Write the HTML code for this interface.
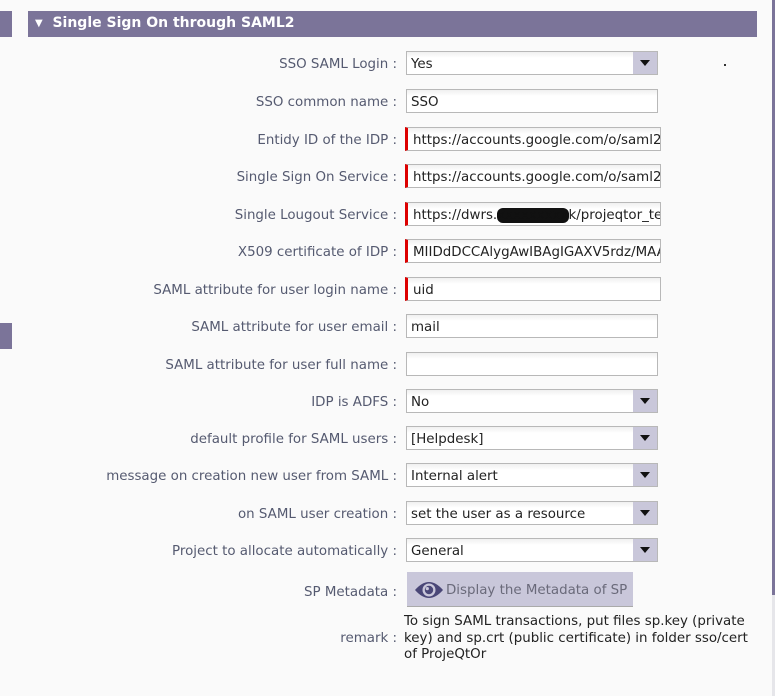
<!DOCTYPE html>
<html><head><meta charset="utf-8"><style>
html,body{margin:0;padding:0;}
body{width:775px;height:696px;background:#fafafa;position:relative;overflow:hidden;font-family:"DejaVu Sans","Liberation Sans",sans-serif;font-size:13.4px;}
.bar{position:absolute;background:#7b7499;}
.hdr{left:28px;top:11px;width:729px;height:26px;color:#fff;font-weight:bold;font-size:14px;line-height:25px;box-sizing:border-box;padding-left:7px;}
.lbl{position:absolute;right:378px;color:#555a70;white-space:nowrap;line-height:16px;}
.in{position:absolute;left:406px;width:252px;height:24px;box-sizing:border-box;border:1px solid #b8b8b8;background:linear-gradient(#f0f0f0,#fff 6px);color:#222;line-height:25px;padding-left:4px;overflow:hidden;white-space:nowrap;}
.req{left:405px;width:256px;border-left:3px solid #d00;padding-left:5px;}
.sel .ar{position:absolute;right:0;top:0;width:24px;height:22px;background:#c9c7da;}
.sel .ar:after{content:"";position:absolute;left:7px;top:8px;border-left:5px solid transparent;border-right:5px solid transparent;border-top:6px solid #111;}
</style></head><body>
<div class="bar" style="left:0;top:11px;width:12px;height:26px"></div>
<div class="bar" style="left:0;top:323px;width:12px;height:26px"></div>
<div class="bar" style="left:772px;top:0;width:3px;height:595px"></div>
<div style="position:absolute;left:772px;top:595px;width:3px;height:101px;background:#e6e6ea"></div>
<div class="bar hdr"><span style="font-size:10px;position:relative;top:-1px">&#9660;</span>&nbsp; Single Sign On through SAML2</div>
<div style="position:absolute;left:724px;top:64px;width:2px;height:2px;background:#333"></div>

<div class="lbl" style="top:57px">SSO SAML Login :</div>
<div class="in sel" style="top:51px">Yes<div class="ar"></div></div>
<div class="lbl" style="top:95px">SSO common name :</div>
<div class="in" style="top:89px">SSO</div>
<div class="lbl" style="top:133px">Entidy ID of the IDP :</div>
<div class="in req" style="top:127px">https://accounts.google.com/o/saml2</div>
<div class="lbl" style="top:170px">Single Sign On Service :</div>
<div class="in req" style="top:164px">https://accounts.google.com/o/saml2</div>
<div class="lbl" style="top:208px">Single Lougout Service :</div>
<div class="in req" style="top:202px">https://dwrs.<span style="background:#111;border-radius:6px;color:#111">xxxxxxxxx</span>k/projeqtor_test</div>
<div class="lbl" style="top:245px">X509 certificate of IDP :</div>
<div class="in req" style="top:239px">MIIDdDCCAlygAwIBAgIGAXV5rdz/MAA</div>
<div class="lbl" style="top:283px">SAML attribute for user login name :</div>
<div class="in req" style="top:277px">uid</div>
<div class="lbl" style="top:320px">SAML attribute for user email :</div>
<div class="in" style="top:314px">mail</div>
<div class="lbl" style="top:358px">SAML attribute for user full name :</div>
<div class="in" style="top:352px"></div>
<div class="lbl" style="top:395px">IDP is ADFS :</div>
<div class="in sel" style="top:389px">No<div class="ar"></div></div>
<div class="lbl" style="top:432px">default profile for SAML users :</div>
<div class="in sel" style="top:426px">[Helpdesk]<div class="ar"></div></div>
<div class="lbl" style="top:469px">message on creation new user from SAML :</div>
<div class="in sel" style="top:463px">Internal alert<div class="ar"></div></div>
<div class="lbl" style="top:507px">on SAML user creation :</div>
<div class="in sel" style="top:501px">set the user as a resource<div class="ar"></div></div>
<div class="lbl" style="top:544px">Project to allocate automatically :</div>
<div class="in sel" style="top:538px">General<div class="ar"></div></div>
<div class="lbl" style="top:585px">SP Metadata :</div>
<div style="position:absolute;left:407px;top:572px;width:226px;height:35px;background:#c9c7da;border-bottom:1px solid #aaa;box-sizing:border-box;color:#6a6a7a;line-height:38px;padding-left:39px;font-size:13.4px;white-space:nowrap">
<svg style="position:absolute;left:7px;top:7px" width="30" height="22" viewBox="0 0 30 22"><path d="M1 11 Q15 -5 29 11 Q15 27 1 11Z" fill="#4a4777"/><circle cx="15" cy="11" r="6.5" fill="#c9c7da"/><circle cx="15" cy="11" r="4.2" fill="#4a4777"/><circle cx="13.3" cy="9.6" r="1.6" fill="#c9c7da"/></svg>Display the Metadata of SP</div>
<div class="lbl" style="top:631px">remark :</div>
<div style="position:absolute;left:404px;top:614px;width:350px;color:#222;line-height:16.5px">To sign SAML transactions, put files sp.key (private key) and sp.crt (public certificate) in folder sso/cert of ProjeQtOr</div>
</body></html>
